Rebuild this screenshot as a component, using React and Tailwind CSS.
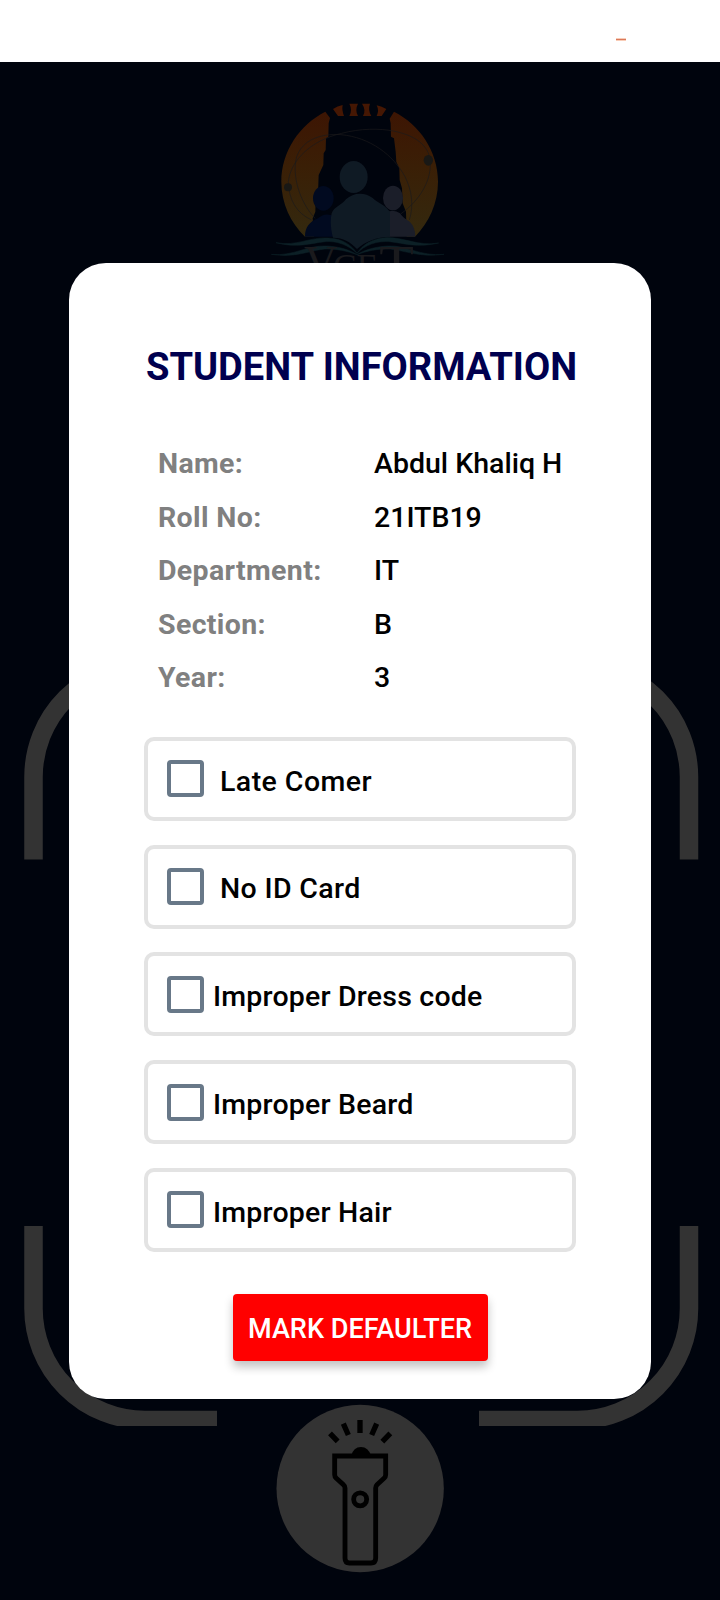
const DETAILS = [
  ["Name:", "Abdul Khaliq H"],
  ["Roll No:", "21ITB19"],
  ["Department:", "IT"],
  ["Section:", "B"],
  ["Year:", "3"],
];

const OPTIONS = [
  { label: "Late Comer", gap: "ml-[16px]", tracking: "tracking-[0.45px]" },
  { label: "No ID Card", gap: "ml-[16px]", tracking: "tracking-[0.35px]" },
  { label: "Improper Dress code", gap: "ml-[9px]", tracking: "tracking-[0.2px]" },
  { label: "Improper Beard", gap: "ml-[9px]", tracking: "tracking-[0.2px]" },
  { label: "Improper Hair", gap: "ml-[9px]", tracking: "tracking-[0.2px]" },
];

function Logo() {
  return (
    <svg viewBox="0 0 600 540" className="h-[180px] w-[200px] shrink-0">
      <defs>
        <linearGradient id="sun" x1="0" y1="0" x2="0" y2="1">
          <stop offset="0" stopColor="#3d1503" />
          <stop offset="0.45" stopColor="#3a1f06" />
          <stop offset="1" stopColor="#33290f" />
        </linearGradient>
      </defs>
      <path d="M196 65 C120 103 64 183 64 275 C64 340 92 398 135 440 L162 440 L158 385 L166 365 L167 325 L174 310 L176 255 L190 225 L191 190 L197 180 L198 145 L205 140 L206 100 L210 84 Z" fill="url(#sun)" />
      <path d="M402 65 C478 103 534 183 534 275 C534 340 506 398 465 440 L440 440 L438 365 L428 340 L426 295 L419 270 L418 235 L409 215 L407 185 L402 145 L393 140 L392 100 L389 86 Z" fill="url(#sun)" />
      <path d="M219 57 Q232 48 248 45 Q245 60 252 78 H234 Z M268 41 H294 Q284 60 294 78 H268 Q278 60 268 41 Z M306 41 H330 Q323 60 334 78 H309 Q319 60 306 41 Z M350 46 Q366 50 379 57 L365 78 H350 Q358 62 350 46 Z" fill="#451703" />
      <g fill="none" stroke="#1b1a1b" strokeWidth="2">
        <path d="M165 385 C118 335 95 255 110 200 C128 150 180 130 243 134 C330 142 400 195 435 260 C455 300 462 345 448 390" />
        <path d="M155 390 C110 370 86 330 85 275 C92 210 155 150 245 130 C300 115 360 115 400 123 C460 135 500 160 510 205 C518 270 480 330 422 372" />
      </g>
      <ellipse cx="84" cy="292" rx="12" ry="12" fill="#191815" />
      <ellipse cx="505" cy="211" rx="14" ry="16" fill="#191815" />
      <ellipse cx="190" cy="325" rx="31" ry="37" fill="#010a20" />
      <path d="M135 440 C135 410 150 395 174 385 C188 372 205 370 225 380 V440 Z" fill="#010a20" />
      <ellipse cx="399" cy="324" rx="30" ry="37" fill="#1b1e29" />
      <path d="M370 440 V370 Q400 355 420 370 C430 385 440 388 450 396 Q466 412 466 440 Z" fill="#1b1e29" />
      <ellipse cx="281" cy="261" rx="42" ry="48" fill="#0f1a24" />
      <path d="M219 443 C210 410 212 385 215 370 C222 350 245 345 258 328 C280 306 315 306 338 324 C352 338 378 345 390 367 V440 C350 440 315 455 291 477 C270 455 250 443 219 443 Z" fill="#0f1a24" />
      <g fill="#0c2026" stroke="#0c2026" strokeWidth="1.5">
        <path d="M48 458 C110 470 150 440 205 444 C245 445 275 465 291 490 C265 465 230 452 195 455 C150 460 110 475 48 458 Z" />
        <path d="M536 459 C475 470 430 440 375 443 C335 446 307 465 291 490 C315 465 350 452 390 455 C430 460 475 474 536 459 Z" />
        <path d="M34 493 C100 500 140 465 200 468 C240 470 270 480 291 494 C260 483 230 476 195 477 C145 482 105 505 34 493 Z" />
        <path d="M552 493 C480 500 440 465 385 468 C345 470 312 480 291 494 C320 483 350 476 390 477 C435 482 480 503 552 493 Z" />
      </g>
      <g fill="#1a1a1d" fontFamily="Liberation Serif, serif">
        <text x="132" y="564" fontSize="138">V</text>
        <text x="219" y="568" fontSize="106">CE</text>
        <text x="358" y="564" fontSize="138" textLength="104" lengthAdjust="spacingAndGlyphs">T</text>
      </g>
    </svg>
  );
}

function ScanFrame() {
  return (
    <svg viewBox="0 0 675 771" className="ml-[2px] mt-[385px] h-[771px] w-[675px] shrink-0" fill="none" stroke="#333333" strokeWidth="18.5">
      <path d="M9.5 204.500 V122 A111.500 111.500 0 0 1 121 10.500 H193" />
      <path d="M665 204.500 V122 A111.500 111.500 0 0 0 553.500 10.500 H455" />
      <path d="M9.500 571 V653.500 A111.500 111.500 0 0 0 121 765 H193" />
      <path d="M665 571 V653.500 A111.500 111.500 0 0 1 553.500 765 H455" />
    </svg>
  );
}

function Torch() {
  return (
    <svg viewBox="0 0 600 600" className="-mt-[36px] h-[200px] w-[200px] shrink-0">
      <circle cx="300.500" cy="295.500" r="251" fill="#333333" />
      <g fill="none" stroke="#000" strokeWidth="16">
        <path d="M210 130 L233 154 M250 101 L265 135 M300 90 V129 M350 101 L335 135 M391 130 L367 155" />
        <path d="M224 198 H377 V254 Q377 260 372 265 L351 284 Q347 288 347 294 V505 Q347 519 333 519 H268 Q255 519 255 505 V294 Q255 288 250 284 L229 265 Q224 260 224 254 Z" strokeWidth="14.500" />
        <circle cx="300.500" cy="328" r="19.500" strokeWidth="14.500" />
      </g>
      <path d="M274 197 Q280 171 303 171 Q325 171 333 197 Z" fill="#000" />
    </svg>
  );
}

export default function App() {
  return (
    <div className="flex h-[1600px] w-[720px] flex-col overflow-hidden bg-white font-['Roboto',sans-serif]">
      <header className="flex h-[62px] shrink-0 items-start justify-end pr-[94px] pt-[38px]">
        <div className="h-[3px] w-[10px] border-y border-[#f9cdb8] bg-[#d9795b]" />
      </header>
      <main className="relative h-[1538px] bg-[#00040d]">
        <div className="flex flex-col items-center pt-[28px]">
          <Logo />
          <ScanFrame />
          <Torch />
        </div>
        <section
          role="dialog"
          className="absolute left-[69px] top-[201px] flex h-[1136px] w-[582px] flex-col items-center rounded-[37px] bg-white"
        >
          <h1 className="mt-[80px] whitespace-nowrap pl-[3px] text-[38.100px] font-bold leading-[48px] text-[#00004f]">
            STUDENT INFORMATION
          </h1>
          <dl className="mt-[46px] grid w-[404px] grid-cols-[216px_1fr] text-[28.500px] leading-[53.500px]">
            {DETAILS.map(([term, value]) => (
              <div key={term} className="contents">
                <dt className="font-bold tracking-[0.35px] text-[#808080]">{term}</dt>
                <dd className="whitespace-nowrap font-medium text-black">{value}</dd>
              </div>
            ))}
          </dl>
          <ul className="mt-[32.250px] flex w-[432px] flex-col gap-[23.750px]">
            {OPTIONS.map(({ label, gap, tracking }) => (
              <li key={label} className="flex h-[84px] items-center rounded-[10px] border-4 border-[#e3e3e3] pl-[19px]">
                <span className="h-[37px] w-[37px] rounded-[4px] border-4 border-[#687888]" />
                <span className={`${gap} ${tracking} mt-[5.500px] text-[28.500px] font-medium leading-[36px] text-black`}>{label}</span>
              </li>
            ))}
          </ul>
          <button className="mt-[41.750px] h-[67px] w-[255px] shrink-0 whitespace-nowrap rounded-[4px] bg-[#ff0000] pt-[4px] text-[27.100px] font-medium text-white shadow-[0_6px_10px_rgba(0,0,0,0.24)]">
            MARK DEFAULTER
          </button>
        </section>
      </main>
    </div>
  );
}
